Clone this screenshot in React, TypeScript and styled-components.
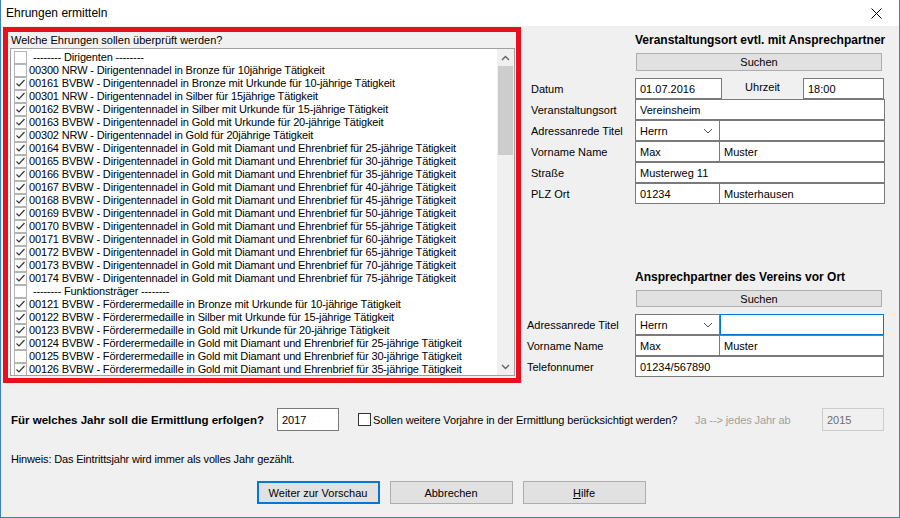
import React from 'react';
import styled, { createGlobalStyle } from 'styled-components';

const GlobalStyle = createGlobalStyle`
  html, body {
    margin: 0;
    padding: 0;
    background: #ffffff;
  }
  body {
    font-family: 'Liberation Sans', Arial, sans-serif;
    font-size: 11px;
    color: #000;
  }
`;

type Entry = { text: string; checked: boolean; header?: boolean };

const dirigentGold = [25, 30, 35, 40, 45, 50, 55, 60, 65, 70, 75].map((years, i) => ({
  text: `00${164 + i} BVBW - Dirigentennadel in Gold mit Diamant und Ehrenbrief für ${years}-jährige Tätigkeit`,
  checked: true,
}));

const entries: Entry[] = [
  { text: '-------- Dirigenten --------', checked: false, header: true },
  { text: '00300 NRW - Dirigentennadel in Bronze für 10jährige Tätigkeit', checked: false },
  { text: '00161 BVBW - Dirigentennadel in Bronze mit Urkunde für 10-jährige Tätigkeit', checked: true },
  { text: '00301 NRW - Dirigentennadel in Silber für 15jährige Tätigkeit', checked: true },
  { text: '00162 BVBW - Dirigentennadel in Silber mit Urkunde für 15-jährige Tätigkeit', checked: true },
  { text: '00163 BVBW - Dirigentennadel in Gold mit Urkunde für 20-jährige Tätigkeit', checked: true },
  { text: '00302 NRW - Dirigentennadel in Gold für 20jährige Tätigkeit', checked: true },
  ...dirigentGold,
  { text: '-------- Funktionsträger --------', checked: false, header: true },
  { text: '00121 BVBW - Förderermedaille in Bronze mit Urkunde für 10-jährige Tätigkeit', checked: true },
  { text: '00122 BVBW - Förderermedaille in Silber mit Urkunde für 15-jährige Tätigkeit', checked: true },
  { text: '00123 BVBW - Förderermedaille in Gold mit Urkunde für 20-jährige Tätigkeit', checked: true },
  { text: '00124 BVBW - Förderermedaille in Gold mit Diamant und Ehrenbrief für 25-jährige Tätigkeit', checked: true },
  { text: '00125 BVBW - Förderermedaille in Gold mit Diamant und Ehrenbrief für 30-jährige Tätigkeit', checked: false },
  { text: '00126 BVBW - Förderermedaille in Gold mit Diamant und Ehrenbrief für 35-jährige Tätigkeit', checked: true },
];

const Window = styled.div`
  width: 900px;
  height: 518px;
  box-sizing: border-box;
  border: 1px solid #3f7fc0;
  border-top: none;
  background: #f0f0f0;
  display: flex;
  flex-direction: column;
  overflow: hidden;
`;

const TitleBar = styled.div`
  height: 26px;
  flex-shrink: 0;
  background: #ffffff;
  display: flex;
  align-items: center;
  justify-content: space-between;
  padding: 0 0 0 5px;
`;

const TitleText = styled.span`
  font-size: 12px;
  color: #000;
`;

const CloseButton = styled.div`
  width: 46px;
  height: 26px;
  display: flex;
  align-items: center;
  justify-content: center;
`;

const Body = styled.div`
  flex: 1;
  display: flex;
  flex-direction: column;
  padding: 1px 0 0 2px;
`;

const TopArea = styled.div`
  display: flex;
  align-items: flex-start;
`;

const Highlight = styled.div`
  width: 518px;
  height: 356px;
  box-sizing: border-box;
  border: 5px solid #e8101c;
  padding: 1px 1px 2px 2px;
  display: flex;
  flex-direction: column;
`;

const ListLabel = styled.div`
  height: 14px;
  line-height: 14px;
  padding-left: 1px;
  margin-bottom: 1px;
  font-size: 11px;
`;

const ListBox = styled.div`
  flex: 1;
  display: flex;
  background: #fff;
  border: 1px solid #a0a0a0;
  overflow: hidden;
`;

const Rows = styled.div`
  flex: 1;
  padding: 2px 0 0 3px;
  overflow: hidden;
`;

const Row = styled.div`
  height: 13px;
  display: flex;
  align-items: center;
  gap: 2px;
  white-space: nowrap;
`;

const Box = styled.span`
  width: 13px;
  height: 13px;
  box-sizing: border-box;
  border: 1px solid #b4b4b4;
  background: #fff;
  flex-shrink: 0;
  display: flex;
  align-items: center;
  justify-content: center;
`;

const ItemText = styled.span<{ $header?: boolean }>`
  font-size: 11px;
  line-height: 13px;
  letter-spacing: -0.15px;
  padding-left: ${(p) => (p.$header ? '4px' : '0')};
`;

const ScrollBar = styled.div`
  width: 17px;
  display: flex;
  flex-direction: column;
  background: #f0f0f0;
`;

const ScrollArrow = styled.div`
  height: 17px;
  display: flex;
  align-items: center;
  justify-content: center;
`;

const ScrollTrack = styled.div`
  flex: 1;
  padding: 0 1px;
`;

const ScrollThumb = styled.div`
  height: 89px;
  background: #cdcdcd;
`;

const RightPane = styled.div`
  flex: 1;
  display: flex;
  flex-direction: column;
`;

const Section = styled.div<{ $indent: number; $top: number }>`
  display: flex;
  flex-direction: column;
  padding-left: ${(p) => p.$indent}px;
  margin-top: ${(p) => p.$top}px;
`;

const SectionHeading = styled.div<{ $labelWidth: number }>`
  margin-left: ${(p) => p.$labelWidth}px;
  font-weight: bold;
  font-size: 12px;
  line-height: 14px;
  height: 14px;
  white-space: nowrap;
`;

const SearchButton = styled.div<{ $labelWidth: number; $height: number }>`
  margin: 6px 0 7px ${(p) => p.$labelWidth + 1}px;
  width: 246px;
  height: ${(p) => p.$height}px;
  box-sizing: border-box;
  background: #e1e1e1;
  border: 1px solid #adadad;
  display: flex;
  align-items: center;
  justify-content: center;
  font-size: 11px;
`;

const FormRow = styled.div`
  display: flex;
  align-items: center;
  height: 21px;
`;

const FieldLabel = styled.div<{ $width: number }>`
  width: ${(p) => p.$width}px;
  flex-shrink: 0;
  font-size: 11px;
  white-space: nowrap;
`;

const Field = styled.div<{ $width: number; $focused?: boolean; $joined?: boolean }>`
  width: ${(p) => p.$width}px;
  height: 21px;
  box-sizing: border-box;
  border: 1px solid ${(p) => (p.$focused ? '#0078d7' : '#7a7a7a')};
  margin-left: ${(p) => (p.$joined ? '-1px' : '0')};
  background: #fff;
  display: flex;
  align-items: center;
  justify-content: space-between;
  padding: 0 6px 0 4px;
  font-size: 11px;
  position: relative;
  z-index: ${(p) => (p.$focused ? 1 : 0)};
`;

const InlineLabel = styled.div`
  width: 81px;
  text-align: center;
  font-size: 11px;
  margin-top: -4px;
`;

const BottomRow = styled.div`
  display: flex;
  align-items: center;
  margin-top: 25px;
  padding-left: 8px;
  height: 23px;
`;

const YearLabel = styled.div`
  width: 266px;
  font-weight: bold;
  font-size: 11.5px;
  white-space: nowrap;
`;

const YearInput = styled.div<{ $disabled?: boolean }>`
  width: 62px;
  height: 23px;
  box-sizing: border-box;
  border: 1px solid ${(p) => (p.$disabled ? '#cccccc' : '#7a7a7a')};
  background: ${(p) => (p.$disabled ? '#f0f0f0' : '#fff')};
  color: ${(p) => (p.$disabled ? '#6d6d6d' : '#000')};
  padding: 0 4px;
  display: flex;
  align-items: center;
  font-size: 11px;
`;

const CheckLabel = styled.label`
  display: flex;
  align-items: center;
  margin-left: 19px;
  width: 337px;
  gap: 2px;
  white-space: nowrap;
  font-size: 11px;
  letter-spacing: -0.12px;
`;

const PlainBox = styled.span`
  width: 13px;
  height: 13px;
  box-sizing: border-box;
  border: 1px solid #333;
  background: #fff;
  flex-shrink: 0;
`;

const GrayText = styled.div`
  width: 127px;
  color: #a0a0a0;
  font-size: 11px;
  letter-spacing: -0.1px;
  white-space: nowrap;
`;

const Hint = styled.div`
  margin: 21px 0 0 8px;
  font-size: 11px;
  line-height: 14px;
  letter-spacing: -0.16px;
`;

const ButtonBar = styled.div`
  display: flex;
  justify-content: center;
  gap: 10px;
  margin-top: 15px;
`;

const DialogButton = styled.div<{ $default?: boolean }>`
  width: 123px;
  height: 23px;
  box-sizing: border-box;
  background: #e1e1e1;
  border: ${(p) => (p.$default ? '2px solid #0078d7' : '1px solid #adadad')};
  display: flex;
  align-items: center;
  justify-content: center;
  font-size: 11px;
`;

const Check = () => (
  <svg width="11" height="11" viewBox="0 0 11 11">
    <path d="M1.5 5.5 L4 8 L9.5 2" fill="none" stroke="#333" strokeWidth="1.2" />
  </svg>
);

const Chevron = ({ dir }: { dir: 'up' | 'down' }) => (
  <svg width="9" height="6" viewBox="0 0 9 6">
    <path
      d={dir === 'up' ? 'M1 5 L4.5 1.5 L8 5' : 'M1 1 L4.5 4.5 L8 1'}
      fill="none"
      stroke="#606060"
      strokeWidth="1.3"
    />
  </svg>
);

const ComboArrow = () => (
  <svg width="10" height="6" viewBox="0 0 10 6">
    <path d="M1 1 L5 5 L9 1" fill="none" stroke="#505050" strokeWidth="1" />
  </svg>
);

export default function App() {
  return (
    <>
      <GlobalStyle />
      <Window>
        <TitleBar>
          <TitleText>Ehrungen ermitteln</TitleText>
          <CloseButton>
            <svg width="11" height="11" viewBox="0 0 11 11">
              <path d="M0.5 0.5 L10.5 10.5 M10.5 0.5 L0.5 10.5" stroke="#000" strokeWidth="1" />
            </svg>
          </CloseButton>
        </TitleBar>
        <Body>
          <TopArea>
            <Highlight>
              <ListLabel>Welche Ehrungen sollen überprüft werden?</ListLabel>
              <ListBox>
                <Rows>
                  {entries.map((e) => (
                    <Row key={e.text}>
                      <Box>{e.checked && <Check />}</Box>
                      <ItemText $header={e.header}>{e.text}</ItemText>
                    </Row>
                  ))}
                </Rows>
                <ScrollBar>
                  <ScrollArrow>
                    <Chevron dir="up" />
                  </ScrollArrow>
                  <ScrollTrack>
                    <ScrollThumb />
                  </ScrollTrack>
                  <ScrollArrow>
                    <Chevron dir="down" />
                  </ScrollArrow>
                </ScrollBar>
              </ListBox>
            </Highlight>

            <RightPane>
              <Section $indent={10} $top={6}>
                <SectionHeading $labelWidth={104}>Veranstaltungsort evtl. mit Ansprechpartner</SectionHeading>
                <SearchButton $labelWidth={104} $height={18}>Suchen</SearchButton>
                <FormRow>
                  <FieldLabel $width={104}>Datum</FieldLabel>
                  <Field $width={87}>01.07.2016</Field>
                  <InlineLabel>Uhrzeit</InlineLabel>
                  <Field $width={81}>18:00</Field>
                </FormRow>
                <FormRow>
                  <FieldLabel $width={104}>Veranstaltungsort</FieldLabel>
                  <Field $width={250}>Vereinsheim</Field>
                </FormRow>
                <FormRow>
                  <FieldLabel $width={104}>Adressanrede Titel</FieldLabel>
                  <Field $width={85}>
                    Herrn
                    <ComboArrow />
                  </Field>
                  <Field $width={166} $joined />
                </FormRow>
                <FormRow>
                  <FieldLabel $width={104}>Vorname Name</FieldLabel>
                  <Field $width={85}>Max</Field>
                  <Field $width={166} $joined>
                    Muster
                  </Field>
                </FormRow>
                <FormRow>
                  <FieldLabel $width={104}>Straße</FieldLabel>
                  <Field $width={250}>Musterweg 11</Field>
                </FormRow>
                <FormRow>
                  <FieldLabel $width={104}>PLZ Ort</FieldLabel>
                  <Field $width={85}>01234</Field>
                  <Field $width={166} $joined>
                    Musterhausen
                  </Field>
                </FormRow>
              </Section>

              <Section $indent={6} $top={66}>
                <SectionHeading $labelWidth={108}>Ansprechpartner des Vereins vor Ort</SectionHeading>
                <SearchButton $labelWidth={108} $height={17}>Suchen</SearchButton>
                <FormRow>
                  <FieldLabel $width={108}>Adressanrede Titel</FieldLabel>
                  <Field $width={85}>
                    Herrn
                    <ComboArrow />
                  </Field>
                  <Field $width={164} $focused />
                </FormRow>
                <FormRow>
                  <FieldLabel $width={108}>Vorname Name</FieldLabel>
                  <Field $width={85}>Max</Field>
                  <Field $width={165} $joined>
                    Muster
                  </Field>
                </FormRow>
                <FormRow>
                  <FieldLabel $width={108}>Telefonnumer</FieldLabel>
                  <Field $width={249}>01234/567890</Field>
                </FormRow>
              </Section>
            </RightPane>
          </TopArea>

          <BottomRow>
            <YearLabel>Für welches Jahr soll die Ermittlung erfolgen?</YearLabel>
            <YearInput>2017</YearInput>
            <CheckLabel>
              <PlainBox />
              Sollen weitere Vorjahre in der Ermittlung berücksichtigt werden?
            </CheckLabel>
            <GrayText>Ja --&gt; jedes Jahr ab</GrayText>
            <YearInput $disabled>2015</YearInput>
          </BottomRow>

          <Hint>Hinweis: Das Eintrittsjahr wird immer als volles Jahr gezählt.</Hint>

          <ButtonBar>
            <DialogButton $default>Weiter zur Vorschau</DialogButton>
            <DialogButton>Abbrechen</DialogButton>
            <DialogButton>
              <span>
                <u>H</u>ilfe
              </span>
            </DialogButton>
          </ButtonBar>
        </Body>
      </Window>
    </>
  );
}
